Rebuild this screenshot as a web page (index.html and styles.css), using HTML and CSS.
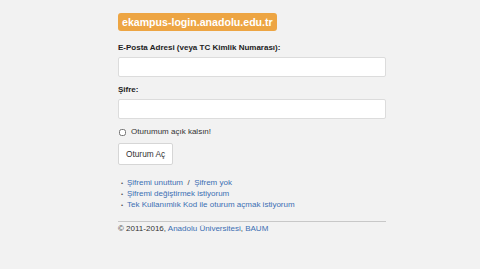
FILE: index.html
```html
<!DOCTYPE html>
<html lang="tr">
<head>
    <meta charset="UTF-8">
    <meta name="viewport" content="width=device-width, initial-scale=1.0">
    <title>Anadolu Üniversitesi eKampüs</title>
    <link rel="stylesheet" href="styles.css">
</head>
<body>
    <div class="page">
        <div class="badge">ekampus-login.anadolu.edu.tr</div>

        <form class="login">
            <label for="username">E-Posta Adresi (veya TC Kimlik Numarası):</label>
            <input type="text" id="username">

            <label for="password">Şifre:</label>
            <input type="password" id="password">

            <div class="remember">
                <input type="checkbox" id="rememberMe">
                <span>Oturumum açık kalsın!</span>
            </div>

            <button type="button">Oturum Aç</button>
        </form>

        <ul class="links">
            <li><a href="#">Şifremi unuttum</a> &nbsp;/&nbsp; <a href="#">Şifrem yok</a></li>
            <li><a href="#">Şifremi değiştirmek istiyorum</a></li>
            <li><a href="#">Tek Kullanımlık Kod ile oturum açmak istiyorum</a></li>
        </ul>

        <div class="footer">
            © 2011-2016, <a href="#">Anadolu Üniversitesi</a>, <a href="#">BAUM</a>
        </div>
    </div>
</body>
</html>
```

FILE: styles.css
```css
body {
    margin: 0;
    background-color: #f2f2f2;
    font-family: 'Liberation Sans', Arial, sans-serif;
    color: #222;
}

.page {
    width: 268px;
    margin-left: 118px;
    padding-top: 12px;
}

.badge {
    display: inline-block;
    background-color: #eda543;
    color: #ffffff;
    font-weight: bold;
    font-size: 10.6px;
    line-height: 18px;
    padding: 0 4px;
    border-radius: 3px;
}

.login {
    margin-top: 12px;
}

label {
    display: block;
    font-size: 8px;
    line-height: 10px;
    font-weight: bold;
    margin-bottom: 4px;
}

input[type="text"],
input[type="password"] {
    display: block;
    width: 100%;
    height: 20px;
    box-sizing: border-box;
    border: 1px solid #dcdcdc;
    border-radius: 2px;
    background-color: #ffffff;
    margin: 0 0 8px 0;
    padding: 2px 4px;
}

.remember {
    display: flex;
    align-items: center;
    font-size: 8px;
    line-height: 10px;
    color: #333;
    margin-top: 8px;
}

.remember input {
    width: 7px;
    height: 7px;
    margin: 0 5px 0 1px;
}

button {
    display: block;
    margin-top: 6px;
    height: 22px;
    padding: 0 7px;
    font-family: inherit;
    font-size: 8.3px;
    color: #333;
    background-color: #ffffff;
    border: 1px solid #d6d6d6;
    border-radius: 2px;
    cursor: pointer;
}

.links {
    list-style: none;
    margin: 12px 0 0 0;
    padding-left: 0;
    font-size: 8px;
    line-height: 11px;
    color: #444;
}

.links li {
    height: 11px;
}

.links li::before {
    content: "•";
    display: inline-block;
    width: 6px;
    padding-left: 3px;
    font-size: 6px;
    line-height: 6px;
    color: #555;
}

a {
    color: #3c6fb3;
    text-decoration: none;
}

.footer {
    margin-top: 11px;
    border-top: 1px solid #c8c8c8;
    padding-top: 2px;
    font-size: 8px;
    color: #333;
}
```
